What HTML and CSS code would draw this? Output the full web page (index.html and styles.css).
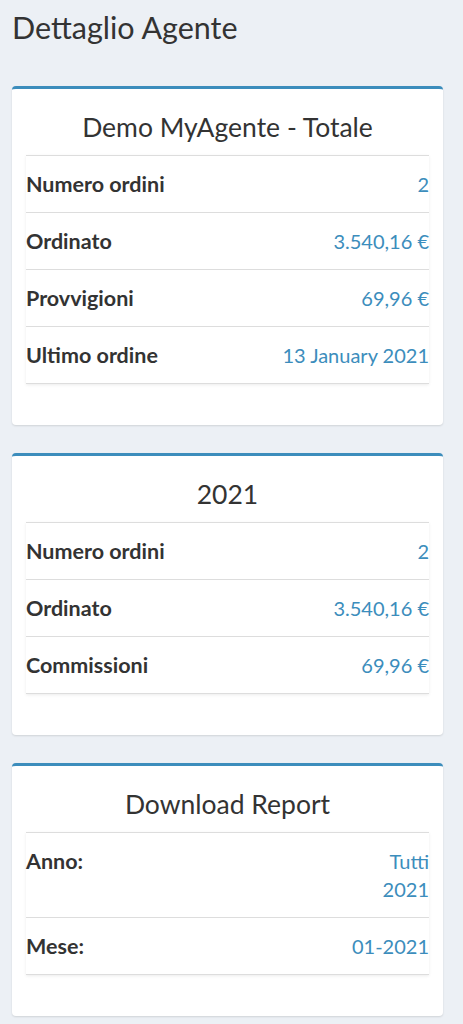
FILE: index.html
```html
<!DOCTYPE html>
<html lang="it">
<head>
<meta charset="utf-8">
<title>Dettaglio Agente</title>
<link rel="stylesheet" href="styles.css">
</head>
<body>
<header class="content-header">
  <h1>Dettaglio Agente</h1>
</header>
<main class="content">
  <section class="box">
    <h3 class="box-title">Demo MyAgente - Totale</h3>
    <ul class="list">
      <li class="item"><b>Numero ordini</b><span class="value">2</span></li>
      <li class="item"><b>Ordinato</b><span class="value">3.540,16 €</span></li>
      <li class="item"><b>Provvigioni</b><span class="value">69,96 €</span></li>
      <li class="item"><b>Ultimo ordine</b><span class="value">13 January 2021</span></li>
    </ul>
  </section>
  <section class="box">
    <h3 class="box-title">2021</h3>
    <ul class="list">
      <li class="item"><b>Numero ordini</b><span class="value">2</span></li>
      <li class="item"><b>Ordinato</b><span class="value">3.540,16 €</span></li>
      <li class="item"><b>Commissioni</b><span class="value">69,96 €</span></li>
    </ul>
  </section>
  <section class="box">
    <h3 class="box-title">Download Report</h3>
    <ul class="list">
      <li class="item"><b>Anno:</b><span class="value value-stack"><span>Tutti</span><span>2021</span></span></li>
      <li class="item"><b>Mese:</b><span class="value">01-2021</span></li>
    </ul>
  </section>
</main>
</body>
</html>
```
FILE: styles.css
```css
html, body {
  margin: 0;
  padding: 0;
}
body {
  background: #ecf0f5;
  color: #333;
  font-family: Lato, "Liberation Sans", sans-serif;
  width: 463px;
  min-height: 1024px;
}
.content-header {
  padding: 12px 12px 0 12px;
}
.content-header h1 {
  margin: 0;
  font-size: 30.5px;
  line-height: 31px;
  font-weight: 400;
  color: #333;
}
.content {
  padding: 43px 20px 0 12px;
  display: flex;
  flex-direction: column;
  gap: 28px;
}
.box {
  background: #fff;
  border-top: 3px solid #3c8dbc;
  border-radius: 4px;
  box-shadow: 0 1px 2px rgba(0, 0, 0, 0.12);
  padding: 0 14px 41px;
}
.box-title {
  margin: 0;
  padding: 20px 0 10px;
  text-align: center;
  font-size: 26.5px;
  line-height: 36px;
  font-weight: 400;
}
.list {
  list-style: none;
  margin: 0;
  padding: 0;
  border-top: 1px solid #ddd;
  box-shadow: 0 1px 3px rgba(0, 0, 0, 0.08);
}
.item {
  display: flex;
  justify-content: space-between;
  align-items: flex-start;
  padding: 14px 0;
  line-height: 28px;
  font-size: 20px;
  border-bottom: 1px solid #ddd;
}
.item b {
  font-weight: 700;
  font-size: 21.5px;
}
.value {
  color: #3c8dbc;
  text-align: right;
  font-size: 20px;
}
.value-stack {
  display: flex;
  flex-direction: column;
  align-items: flex-end;
}
```
